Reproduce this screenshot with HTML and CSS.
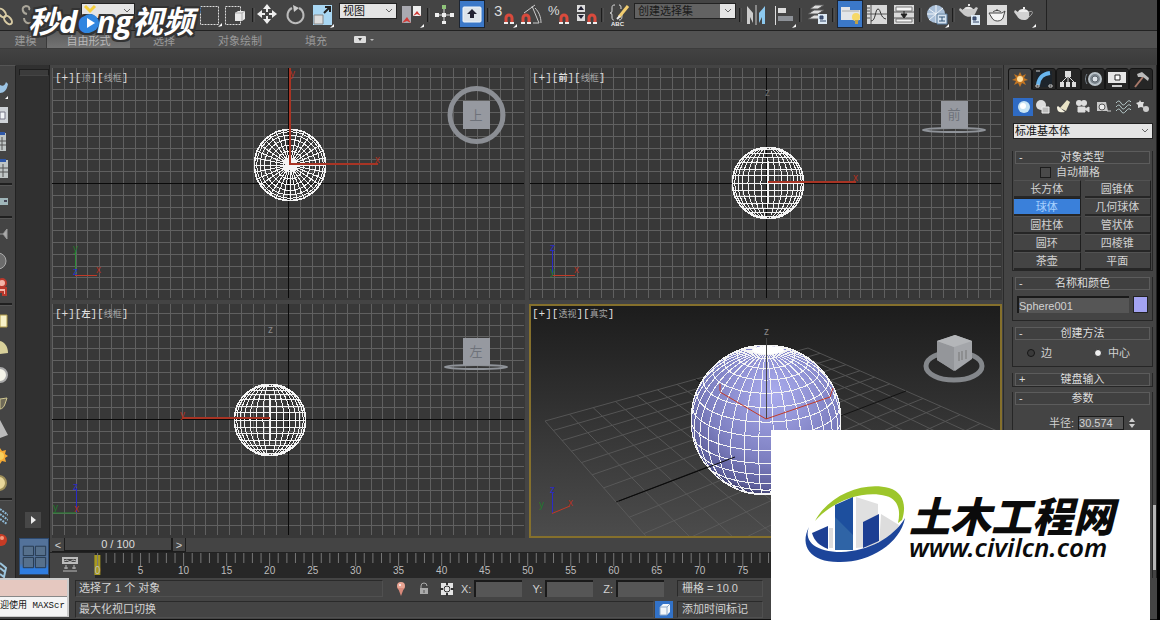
FILE: index.html
```html
<!DOCTYPE html>
<html lang="zh-CN">
<head>
<meta charset="utf-8">
<title>3ds Max</title>
<link rel="stylesheet" href="styles.css">
</head>
<body>
<div class="app">
  <header class="toolbar">
    <div class="tools">
      <button class="tool" aria-label="链接"><svg viewBox="0 0 24 24"><g fill="none" stroke="#d8cba4" stroke-width="2"><ellipse cx="8" cy="11" rx="3" ry="5" transform="rotate(-40 8 11)"/><ellipse cx="14" cy="18" rx="3" ry="5" transform="rotate(-40 14 18)"/></g></svg></button>
      <button class="tool" aria-label="取消链接"><svg viewBox="0 0 24 24"><g fill="none" stroke="#aaa69a" stroke-width="2"><path d="M6 12c-5-1-6-7-1-8 3 0 4 2 3 4M3 16c0 4 3 6 7 5"/></g></svg></button>
      <span class="spacer"></span>
      <select class="combo filter" aria-label="选择过滤器"><option></option></select>
      <span class="spacer wide"></span>
      <button class="tool" aria-label="矩形选择区域"><svg viewBox="0 0 24 24"><rect x="2.500" y="4.500" width="18" height="18" fill="none" stroke="#ddd" stroke-dasharray="2 1"/><path d="M20 25l4-4v3z" fill="#fff"/></svg></button>
      <button class="tool" aria-label="窗口/交叉"><svg viewBox="0 0 24 24"><rect x="0.500" y="4.500" width="15" height="18" fill="none" stroke="#ddd" stroke-dasharray="2 1"/><path d="M10 11l3-2h7v8l-3 2h-7z" fill="#e8e8e8"/><path d="M10 11h7v8M17 11l3-2" fill="none" stroke="#aaa"/></svg></button>
      <i class="sep"></i>
      <button class="tool" aria-label="移动"><svg viewBox="0 0 24 24"><path d="M9 2l4 5H5zM9 22l4-5H5zM-1 12l5-4v8zM19 12l-5-4v8z" fill="#eee"/><path d="M9 6v4M9 14v4M3 12h4M11 12h4" stroke="#eee" stroke-width="2"/></svg></button>
      <button class="tool" aria-label="旋转"><svg viewBox="0 0 24 24"><path d="M7 6A8 8 0 1 0 14 6" fill="none" stroke="#bbb" stroke-width="2"/><path d="M8 3l6 3-5 4z" fill="#ccc"/></svg></button>
      <button class="tool" aria-label="缩放"><svg viewBox="0 0 24 24"><path d="M1 3h19v20H1z" fill="#a9d7f3"/><path d="M2 13h9v9H2z" fill="#ddd" stroke="#888"/><path d="M12 11l5-5M13 5h5v5" stroke="#222" stroke-width="2" fill="none"/><path d="M18 26l4-4v3z" fill="#fff"/></svg></button>
      <select class="combo view" aria-label="参考坐标系"><option>视图</option></select>
      <button class="tool" aria-label="使用轴点中心"><svg viewBox="0 0 24 24"><path d="M2 4h9v17H2z" fill="#a9a9b0"/><path d="M13 4h8v10h-8z" fill="#eee"/><path d="M2 21l5-6 4 6-4-2zM13 14l4-5 4 5-4-2z" fill="#d23a36"/><path d="M20 26l4-4v3z" fill="#fff"/></svg></button>
      <i class="sep"></i>
      <button class="tool" aria-label="选择并操纵"><svg viewBox="0 0 24 24"><path d="M11 5v17M3 13h17" stroke="#ddd"/><path d="M9 3h4v4H9z" fill="#8fc47a"/><path d="M9 11h4v4H9zM2 11h4v4H2zM17 11h4v4h-4zM9 19h4v3H9z" fill="#eee"/></svg></button>
      <button class="tool on" aria-label="键盘快捷键覆盖切换"><svg viewBox="0 0 24 24"><rect x="3" y="5" width="18" height="15" rx="1" fill="#dce3ea" stroke="#eff5fa"/><path d="M12 7l5 5h-3v4h-4v-4H7z" fill="#223"/></svg></button>
      <i class="sep"></i>
      <button class="tool" aria-label="捕捉开关"><svg viewBox="0 0 24 24"><text class="num" x="1" y="14">3</text><path d="M13 22v-6a3 3 0 0 1 6 0v6" stroke="#d94a3c" stroke-width="3" fill="none"/><path d="M11 21h4M17 21h4" stroke="#eee" stroke-width="2"/><path d="M20 26l4-4v3z" fill="#fff"/></svg></button>
      <button class="tool" aria-label="角度捕捉"><svg viewBox="0 0 24 24"><path d="M3 22v-6a3 3 0 0 1 6 0v6" stroke="#d94a3c" stroke-width="3" fill="none"/><path d="M1 21h4M7 21h4" stroke="#eee" stroke-width="2"/><path d="M4 11l11-8M12 4l7 17h-6M15 6c4 4 6 9 6 15" stroke="#ccc" fill="none"/></svg></button>
      <button class="tool" aria-label="百分比捕捉"><svg viewBox="0 0 24 24"><text class="num pct" x="1" y="13">%</text><path d="M14 22v-6a3 3 0 0 1 6 0v6" stroke="#d94a3c" stroke-width="3" fill="none"/><path d="M12 21h4M18 21h4" stroke="#eee" stroke-width="2"/></svg></button>
      <button class="tool" aria-label="微调器捕捉"><svg viewBox="0 0 24 24"><path d="M3 3h8v7H3zM3 12h8v7H3z" fill="#ddd"/><path d="M4 8l3-4 3 4zM4 13l3 4 3-4z" fill="#223"/><path d="M15 22v-6a3 3 0 0 1 6 0v6" stroke="#d94a3c" stroke-width="3" fill="none"/><path d="M13 21h4M19 21h4" stroke="#eee" stroke-width="2"/></svg></button>
      <i class="sep"></i>
      <button class="tool" aria-label="编辑命名选择集"><svg viewBox="0 0 24 24"><path d="M8 3c-3 0-3 1-3 4s0 4-2 4c2 0 2 1 2 4s1 3 2 3M12 3c2 0 2 1 2 4M15 12c0 4 0 6-3 6" stroke="#ddd" fill="none"/><path d="M12 15l9-11" stroke="#f2cd70" stroke-width="3"/><path d="M10 17l3-3" stroke="#eee" stroke-width="2"/><text class="abc" x="4" y="24">ABC</text></svg></button>
      <select class="combo sets" aria-label="命名选择集"><option>创建选择集</option></select>
      <i class="sep"></i>
      <button class="tool" aria-label="镜像"><svg viewBox="0 0 24 24"><path d="M2 4l6 7v10l-3-6v7H2z" fill="#ccc"/><path d="M20 4l-6 7v10l3-6v7h3z" fill="#8cc8ee"/><path d="M11 3v20" stroke="#ccc"/></svg></button>
      <button class="tool" aria-label="对齐"><svg viewBox="0 0 24 24"><path d="M3.500 4v19" stroke="#ddd"/><path d="M6 6h8v5H6z" fill="#ddd"/><path d="M6 14h15v5H6z" fill="#8d9197"/><path d="M20 26l4-4v3z" fill="#fff"/></svg></button>
      <i class="sep"></i>
      <button class="tool" aria-label="层管理器"><svg viewBox="0 0 24 24"><path d="M3 17l6-4h10l-6 4zM3 12l6-4h10l-6 4zM5 7l5-4h9l-6 4z" fill="#ddd" stroke="#555"/><path d="M13 12h9v10h-9z" fill="#dbe8f3"/><path d="M15 14h3v3h-3zM15 19h6" stroke="#346" fill="#457"/></svg></button>
      <i class="sep"></i>
      <button class="tool on" aria-label="功能区切换"><svg viewBox="0 0 24 24"><path d="M3 5h9v3h10v10H3z" fill="#e3e5e8"/><path d="M4 9h17" stroke="#aaa"/><circle cx="18" cy="15" r="4" fill="#f6d868"/><path d="M17 18h3v4h-3z" fill="#bfa048"/></svg></button>
      <button class="tool" aria-label="曲线编辑器"><svg viewBox="0 0 24 24"><path d="M2 3h20v19H2z" fill="#d9d9d9"/><path d="M6 3v19M2 12h20M2 6h3M2 9h3M2 16h3" stroke="#555"/><path d="M6 19c5 0 4-12 7-12s2 9 8 10" stroke="#333" fill="none"/></svg></button>
      <button class="tool" aria-label="图解视图"><svg viewBox="0 0 24 24"><path d="M2 3h20v19H2z" fill="#d9d9d9"/><path d="M4 5h16v4H4zM4 17h16v3H4z" fill="#f4f4f4" stroke="#777"/><path d="M2 10h20M2 16h20" stroke="#555"/><path d="M12 9v4M9 12h6l-3 4z" stroke="#222" fill="#222"/></svg></button>
      <i class="sep"></i>
      <button class="tool" aria-label="材质编辑器"><svg viewBox="0 0 24 24"><circle cx="11" cy="12" r="9" fill="#a9bfd8"/><path d="M4 7l14 10M18 6L4 18M11 3v18M2 12h18" stroke="#eef3f8"/><path d="M12 12h10v10H12z" fill="#d5e2ef" stroke="#579"/><path d="M14 15h6M17 15v4M14 19h6" stroke="#357"/><path d="M20 26l4-4v3z" fill="#fff"/></svg></button>
      <i class="sep"></i>
      <button class="tool" aria-label="渲染设置"><svg viewBox="0 0 24 24"><path d="M5 7h11l2-2 2 1-3 6c-1 3-8 4-11 1L1 8l1-2 3 2z" fill="#c9c9c9"/><path d="M6 7c1-3 7-3 9 0zM10 2h2v2h-2z" fill="#e4e4e4"/><path d="M13 13h9v10h-9z" fill="#dbe8f3"/><path d="M15 15h3v3h-3zM15 20h6" stroke="#346" fill="#457"/></svg></button>
      <button class="tool" aria-label="渲染帧窗口"><svg viewBox="0 0 24 24"><path d="M2 3h20v20H2z" fill="#dcdcdc"/><path d="M7 11h10l3-2-2 7c-2 4-9 4-11 0l-3-5z" fill="#f6f6f6" stroke="#444"/><path d="M8 10c2-2 6-2 8 0M12 7v2" stroke="#444" fill="none"/></svg></button>
      <button class="tool" aria-label="渲染产品"><svg viewBox="0 0 24 24"><path d="M6 10h11c1 6-1 8-5 8s-6-2-7-4L2 10l1-2z" fill="#d2d2d2"/><path d="M6 10c1-4 9-4 11 0zM11 5h2v2h-2z" fill="#eee"/><path d="M17 10c4-2 5 1 0 5" stroke="#aaa" fill="none"/><path d="M20 26l4-4v3z" fill="#fff"/></svg></button>
    </div>
  </header>

  <nav class="ribbon">
    <button class="rtab">建模</button>
    <button class="rtab active">自由形式</button>
    <button class="rtab">选择</button>
    <button class="rtab">对象绘制</button>
    <button class="rtab">填充</button>
    <button class="rmenu" aria-label="功能区选项"><svg viewBox="0 0 22 8"><rect x="0" y="0" width="12" height="7" rx="1" fill="#ddd"/><path d="M4 2h4L6 5z" fill="#444"/><path d="M16 3h4l-2 2z" fill="#bbb"/></svg></button>
  </nav>
  <div class="ribbon-body"></div>

  <main class="work">
    <aside class="side">
      <svg viewBox="0 0 8 24"><path d="M0 10c3 2 5 0 6-3l2 2c-1 6-4 9-8 9z" fill="#9cc4e4"/><path d="M5 24l3-3v3z" fill="#fff"/></svg>
      <svg viewBox="0 0 8 24"><path d="M0 5h8v16H0z" fill="#cfd3d8"/><path d="M0 10h5v7H0z" fill="#f1f4f8" stroke="#778"/></svg>
      <svg viewBox="0 0 8 24"><path d="M0 4h6v18H0z" fill="#bfc5c5"/><path d="M0 3h5v3H0z" fill="#2f58a8"/><path d="M2 8v13M0 12h6M0 16h6" stroke="#555"/></svg>
      <svg viewBox="0 0 8 24"><path d="M0 4h8v18H0z" fill="#bfc5c5"/><path d="M0 3h6v3H0z" fill="#2f58a8"/><path d="M3 8v13M0 12h8M0 16h8" stroke="#555"/></svg>
      <i class="hsep"></i>
      <svg viewBox="0 0 8 24"><path d="M0 9h8v7H0z" fill="#9fb5b9"/><path d="M4 12h3" stroke="#445" stroke-width="2"/></svg>
      <i class="hsep"></i>
      <svg viewBox="0 0 8 24"><path d="M0 12h3l4-5v10l-4-5" fill="#aaa" stroke="#999"/></svg>
      <svg viewBox="0 0 8 24"><circle cx="-2" cy="12" r="8" fill="#6c6c6c" stroke="#aaa"/></svg>
      <svg viewBox="0 0 8 24"><circle cx="2" cy="7" r="4" fill="#f3b4a8" stroke="#b8382c" stroke-width="2"/><path d="M0 12h6v7H3v-3H0" fill="#f3b4a8" stroke="#b8382c" stroke-width="2"/></svg>
      <i class="hsep"></i>
      <svg viewBox="0 0 8 24"><path d="M0 6h7v12H0z" fill="#f8f2c9" stroke="#b09b4a"/></svg>
      <svg viewBox="0 0 8 24"><path d="M0 5c5 1 8 6 8 12l-8 1z" fill="#d8d09a"/></svg>
      <svg viewBox="0 0 8 24"><circle cx="0" cy="12" r="7" fill="#f4f3e8" stroke="#aaa" stroke-width="2"/></svg>
      <svg viewBox="0 0 8 24"><path d="M0 9l7-1-2 6c-1 3-3 5-5 5z" fill="#6f6a58" stroke="#cfc690"/></svg>
      <svg viewBox="0 0 8 24"><path d="M0 3l8 15-8 3z" fill="#bbb"/></svg>
      <svg viewBox="0 0 8 24"><path d="M0 4l2 3 4-1-1 4 3 2-3 2 1 4-4-1-2 3z" fill="#f4a933"/><circle cx="0" cy="12" r="4" fill="#f8cf5c"/></svg>
      <svg viewBox="0 0 8 24"><circle cx="-1" cy="12" r="7" fill="#e7d69a" stroke="#9d8e59" stroke-width="2"/></svg>
      <i class="hsep"></i>
      <svg viewBox="0 0 8 24"><path d="M0 5l8 6M0 10l8 6M0 15l7 5" stroke="#8fb9d6" stroke-width="2" stroke-dasharray="2 1"/></svg>
      <svg viewBox="0 0 8 24"><circle cx="1" cy="9" r="6" fill="#c63b25"/><circle cx="2" cy="7" r="2" fill="#f59a7c"/></svg>
      <svg viewBox="0 0 8 24"><path d="M0 5l6 5-2 9-4-3M0 10l5 4" fill="none" stroke="#9cc4dc" stroke-width="2"/></svg>
    </aside>
    <aside class="layouts">
      <span class="grip"></span>
      <button class="play" aria-label="展开"><svg viewBox="0 0 16 16"><path d="M6 4l5 4-5 4z" fill="#eee"/></svg></button>
      <button class="quad" aria-label="四视图"><svg viewBox="0 0 30 37"><g fill="#56708c" stroke="#26384e"><path d="M3.500 7.500h11v10h-11zM16.500 7.500h11v10h-11zM3.500 19.500h11v11h-11zM16.500 19.500h11v11h-11z"/></g></svg></button>
    </aside>

    <section class="center">
      <div class="views">
        <div class="vp"><svg id="vp-top" viewBox="52 68 473 232" preserveAspectRatio="xMidYMid slice"></svg><div class="vlabel">[+][<small>顶</small>][<small>线框</small>]</div></div>
        <div class="vp"><svg id="vp-front" viewBox="529 68 473 232" preserveAspectRatio="xMidYMid slice"></svg><div class="vlabel">[+][<b>前</b>][<small>线框</small>]</div></div>
        <div class="vp"><svg id="vp-left" viewBox="52 304 473 234" preserveAspectRatio="xMidYMid slice"></svg><div class="vlabel">[+][<b>左</b>][<small>线框</small>]</div></div>
        <div class="vp live"><svg id="vp-persp" viewBox="529 304 473 234" preserveAspectRatio="xMidYMid slice"></svg><div class="vlabel">[+][<small>透视</small>][<small>真实</small>]</div></div>
      </div>
      <div class="slider"><button>&lt;</button><button class="frame">0 / 100</button><button>&gt;</button></div>
      <div class="timeline">
        <svg class="mini" viewBox="0 0 16 16"><path d="M1 1h14v5H1z" fill="none" stroke="#bbb" stroke-width="2"/><path d="M2 4l3-1 3 2 3-2 3 1M1 14h14M4 8v4M12 8v4M2 11h4M10 11h4" stroke="#bbb" fill="none"/></svg>
        <div class="ruler"><svg id="ruler"></svg></div>
      </div>
    </section>

    <aside class="panel">
      <div class="ptabs">
        <button class="ptab active" aria-label="创建"><svg viewBox="0 0 20 18"><path d="M10 2l2 4 4-2-2 4 4 2-4 1 2 4-4-2-2 4-2-4-4 2 2-4-4-1 4-2-2-4 4 2z" fill="#c57722"/><circle cx="10" cy="9" r="3" fill="#ffe0a0"/></svg></button>
        <button class="ptab" aria-label="修改"><svg viewBox="0 0 20 18"><path d="M2 1h16v16H2z" fill="#1d242b"/><path d="M4 15C5 7 9 4 16 3" stroke="#69b6ee" stroke-width="4" fill="none"/><path d="M2 1h4M15 15h3v2h-3zM2 15h3v2H2z" stroke="#ccc"/></svg></button>
        <button class="ptab" aria-label="层次"><svg viewBox="0 0 20 18"><path d="M7 1h6v6H7zM2 12h4v5H2zM8 12h4v5H8zM14 12h4v5h-4z" fill="#ddd"/><path d="M10 6v6M4 12l5-5M16 12l-5-5" stroke="#ddd"/></svg></button>
        <button class="ptab" aria-label="运动"><svg viewBox="0 0 20 18"><circle cx="12" cy="9" r="6" fill="#7b858d" stroke="#b9c2c8" stroke-width="2"/><circle cx="12" cy="9" r="3" fill="#dde3e8" stroke="#59626a"/><path d="M4 4c-2 3-2 7 0 10" stroke="#78838c" fill="none"/></svg></button>
        <button class="ptab" aria-label="显示"><svg viewBox="0 0 20 18"><path d="M1 2h18v11H1z" fill="#e6e6e6"/><path d="M8 5h5v5H8z" fill="#fff" stroke="#222"/><path d="M5 15h10v2H5z" fill="#ccc"/></svg></button>
        <button class="ptab" aria-label="工具"><svg viewBox="0 0 20 18"><path d="M4 17L12 7" stroke="#a9796a" stroke-width="2"/><path d="M6 4l5-2 7 6-1 3-5-4-5 0z" fill="#bbb"/></svg></button>
      </div>
      <div class="cats">
        <button class="cat on" aria-label="几何体"><svg viewBox="0 0 18 18"><circle cx="10" cy="9" r="6" fill="#c8e4f4"/><circle cx="9" cy="8" r="3" fill="#fff"/></svg></button>
        <button class="cat" aria-label="图形"><svg viewBox="0 0 18 18"><circle cx="7" cy="7" r="5" fill="#ddd"/><path d="M8 9h7v6H8z" fill="#bbb" stroke="#eee"/></svg></button>
        <button class="cat" aria-label="灯光"><svg viewBox="0 0 18 18"><path d="M13 2l3 2-4 9-6-3z" fill="#e9e3c6"/><path d="M3 9c0 5 3 6 8 5L4 8z" fill="#f5f1df"/></svg></button>
        <button class="cat" aria-label="摄影机"><svg viewBox="0 0 18 18"><circle cx="5" cy="5" r="3" fill="#ddd"/><circle cx="10" cy="5" r="3" fill="#ddd"/><path d="M4 9h7v5H4zM11 11l4-2v5z" fill="#ddd" stroke="#ddd"/></svg></button>
        <button class="cat" aria-label="辅助对象"><svg viewBox="0 0 18 18"><path d="M3 4h9l2 9H3z" fill="#c9c9c9"/><circle cx="8" cy="9" r="3" fill="#eee" stroke="#555"/><path d="M13 13h4" stroke="#ccc"/></svg></button>
        <button class="cat" aria-label="空间扭曲"><svg viewBox="0 0 18 18"><path d="M2 5q3-4 5 0t5 0t5-1M2 9q3-4 5 0t5 0t5-1M2 13q3-4 5 0t5 0t5-1" stroke="#b5c8c8" fill="none"/></svg></button>
        <button class="cat" aria-label="系统"><svg viewBox="0 0 18 18"><path d="M6 2l1 2 3 0-1 3 1 3-3-1-3 1 0-3-2-2 3-1z" fill="#ddd"/><circle cx="12" cy="11" r="3" fill="#ccc"/></svg></button>
      </div>
      <select class="combo prim" aria-label="对象类别"><option>标准基本体</option></select>
      <section class="roll first">
        <h2><span>-</span>对象类型</h2>
        <label class="auto"><input type="checkbox">自动栅格</label>
        <div class="types">
          <button>长方体</button><button>圆锥体</button>
          <button class="sel">球体</button><button>几何球体</button>
          <button>圆柱体</button><button>管状体</button>
          <button>圆环</button><button>四棱锥</button>
          <button>茶壶</button><button>平面</button>
        </div>
      </section>
      <section class="roll">
        <h2><span>-</span>名称和颜色</h2>
        <div class="name"><input type="text" value="Sphere001" aria-label="名称"><button class="swatch" aria-label="颜色"></button></div>
      </section>
      <section class="roll">
        <h2><span>-</span>创建方法</h2>
        <div class="radios"><label><input type="radio" name="m">边</label><label><input type="radio" name="m" checked>中心</label></div>
      </section>
      <section class="roll">
        <h2><span>+</span>键盘输入</h2>
      </section>
      <section class="roll params">
        <h2><span>-</span>参数</h2>
        <div class="radius"><label for="rad">半径:</label><input id="rad" type="text" value="30.574"><svg viewBox="0 0 8 12"><path d="M1 5l3-4 3 4zM1 7h6l-3 4z" fill="#ccc"/></svg></div>
      </section>
    </aside>
  </main>

  <footer class="status">
    <div class="listener"><div class="rec"></div><div class="out">迎使用 MAXScr</div></div>
    <div class="rows">
      <div class="row">
        <div class="msg">选择了 1 个 对象</div>
        <svg class="sicon" viewBox="0 0 16 16"><circle cx="8" cy="5" r="4" fill="#e9a493"/><path d="M5 7h6l-3 8z" fill="#d8897a"/><circle cx="7" cy="4" r="1" fill="#fff"/></svg>
        <svg class="sicon" viewBox="0 0 16 16"><path d="M5 8V5a3 3 0 0 1 6 0" fill="none" stroke="#aaa"/><path d="M4 7h8v6H4z" fill="#aaa"/><path d="M8 9v3" stroke="#555"/></svg>
        <svg class="sicon" viewBox="0 0 16 16"><path d="M2 2h12v12H2z" fill="#e4e4e4"/><circle cx="8" cy="8" r="3" fill="#e4e4e4" stroke="#333"/><path d="M8 1v3M8 12v3M1 8h3M12 8h3" stroke="#333" stroke-width="2"/></svg>
        <label>X:<input type="text"></label>
        <label>Y:<input type="text"></label>
        <label>Z:<input type="text"></label>
        <div class="cell">栅格 = 10.0</div>
      </div>
      <div class="row">
        <div class="msg">最大化视口切换</div>
        <button class="iso" aria-label="孤立当前选择"><svg viewBox="0 0 18 16"><path d="M5 5l3-3h7v8l-3 3H5z" fill="#f2f6fa"/><path d="M5 5h7v8H5zM12 5l3-3" fill="none" stroke="#8fa8c6"/></svg></button>
        <div class="cell">添加时间标记</div>
      </div>
    </div>
  </footer>

  <div class="miaodong"><span>秒d<span class="o">o</span>ng视频</span><svg viewBox="0 0 24 32"><circle cx="12" cy="20" r="9" fill="#2f86e0"/><path d="M9 15l8 5-8 5z" fill="#fff"/><path d="M7 3l5 5 5-5" stroke="#f6cf3c" stroke-width="3" fill="none"/></svg></div>

  <div class="thumb"></div>
  <div class="civil">
    <svg viewBox="0 0 104 86">
      <path d="M10 39C24 12 60-1 84 6c14 4 18 17 13 32l-4 3c3-13 0-24-12-27C60 8 28 18 10 39z" fill="#9dc62b"/>
      <path d="M51 15l22 7v42l-22 2z" fill="#e0e0e0"/><path d="M76 32l18 11-10 20H74z" fill="#ddd"/>
      <path d="M30 23l18-8v53H30z" fill="#1d4f9e"/><path d="M30 35l18 18v15H30z" fill="#4179ad" opacity=".5"/>
      <path d="M7 51l16-7v23c-8-3-14-8-16-16z" fill="#1d3f93"/><path d="M26 46v20" stroke="#ddd" stroke-width="4"/>
      <path d="M58 40l16-8v27l-16 7z" fill="#1d3f93"/>
      <path d="M4 45C-2 60 12 70 36 70c28-1 52-14 64-34-5 26-36 45-67 44C6 80-6 64 4 45z" fill="#1d459a"/>
    </svg>
    <div class="ctext"><strong>土木工程网</strong><a href="#">www.civilcn.com</a></div>
  </div>
</div>
<script src="scene.js"></script>
</body>
</html>
```
FILE: styles.css
```css
* { box-sizing: border-box; }
body {
  margin: 0;
  background: #000;
  color: #d2d2d2;
  font: 11px/14px "Liberation Sans", "Noto Sans CJK SC", sans-serif;
}
button, input, select { font: inherit; color: inherit; border: 0; border-radius: 0; padding: 0; margin: 0; background: none; }
svg { display: block; }
.app { position: relative; display: flex; flex-direction: column; height: 100vh; overflow: hidden; margin-right: 3px; background: #444; }

.toolbar { border-bottom: 1px solid #222; flex: none; }
.tools { display: flex; gap: 3px; height: 30px; margin-left: -6px; width: max-content; padding-right: 10px; border-right: 1px solid #222; }
.tool { width: 24px; height: 26px; margin-top: 1px; flex: none; }
.tool svg { width: 24px; height: 24px; overflow: visible; }
.tool.on { background: #3b78c8; outline: 1px solid #1c2533; }
.sep { width: 3px; height: 14px; margin-top: 8px; border-left: 1px solid #1d1d1d; border-right: 1px solid #505050; flex: none; }
.spacer { width: 30px; }
.spacer.wide { width: 57px; }
.num { font: 15px "Liberation Sans", sans-serif; fill: #ddd; }
.num.pct { font-size: 13px; }
.abc { font: bold 6px "Liberation Sans", sans-serif; fill: #eee; }
.combo {
  height: 16px; margin-top: 3px; padding: 0 3px; color: #111; border: 1px solid #222;
  appearance: none;
  background: #e4e4e4 url("data:image/svg+xml,%3Csvg xmlns='http://www.w3.org/2000/svg' width='9' height='6'%3E%3Cpath d='M1 1l3 3 3-3' fill='none' stroke='%23666'/%3E%3C/svg%3E") no-repeat right 2px center;
}
.combo.view { width: 58px; }
.combo.filter { width: 54px; }
.combo.sets {
  width: 102px; color: #1a1a1a;
  background:
    url("data:image/svg+xml,%3Csvg xmlns='http://www.w3.org/2000/svg' width='9' height='6'%3E%3Cpath d='M1 1l3 3 3-3' fill='none' stroke='%23666'/%3E%3C/svg%3E") no-repeat right 2px center,
    linear-gradient(90deg, #626262 calc(100% - 15px), #e4e4e4 calc(100% - 15px));
}

.ribbon { display: flex; height: 18px; flex: none; background: #525252; color: #999; border-bottom: 1px solid #3c3c3c; }
.rtab { text-align: center; width: 68px; padding-top: 2px; }
.rtab:first-child { width: 47px; padding-left: 5px; border-right: 1px solid #3a3a3a; }
.rtab.active { width: 83px; background: linear-gradient(#5c5c5c, #737373); color: #b9b9b9; }
.rtab:nth-child(4) { width: 84px; }
.rtab:nth-child(5) { width: 68px; }
.rmenu { padding-left: 4px; }
.rmenu svg { width: 22px; height: 8px; }
.ribbon-body { height: 16px; flex: none; background: linear-gradient(#424242, #3a3a3a); }

.work { flex: 1; display: flex; min-height: 0; }
.side { width: 16px; flex: none; display: flex; flex-direction: column; gap: 3px; padding-top: 9px; overflow: hidden; border-right: 1px solid #222; border-top: 1px solid #555; }
.side svg { width: 8px; height: 24px; flex: none; }
.hsep { height: 3px; width: 12px; border-top: 2px solid #1f1f1f; border-bottom: 1px solid #555; flex: none; }
.layouts { width: 34px; flex: none; display: flex; flex-direction: column; background: #303030; padding: 4px 0 3px 3px; border-right: 1px solid #222; }
.grip { height: 7px; border: 1px solid #1e1e1e; border-bottom-color: #444; background: #3b3b3b; }
.play { width: 16px; height: 16px; margin: auto 0 10px 6px; background: #474747; }
.quad { height: 37px; background: linear-gradient(#53729a 70%, #2f7de0 85%); border: 1px solid #2d4a70; }
.quad svg { width: 28px; height: 35px; }
.center { flex: 1; min-width: 0; display: flex; flex-direction: column; }
.views { flex: 1; min-height: 0; display: grid; grid-template: 232fr 234fr / 1fr 1fr; gap: 4px; padding: 3px 1px 0 2px; background: #444; }
.vp { position: relative; min-height: 0; background: #383838; overflow: hidden; }
.vp > svg { width: 100%; height: 100%; }
.vp.live { background: linear-gradient(#1c1c1c, #4c4c4c); }
.vp.live::after { content: ""; position: absolute; inset: 0; border: 2px solid #85702c; }
.vlabel { position: absolute; left: 3px; top: 3px; font: 11px/14px "Liberation Mono", "Noto Sans CJK SC", monospace; color: #ddd; }
.vlabel small { font: 9px "Noto Sans CJK SC", sans-serif; color: #a5a5a5; }
.vlabel b { font: bold 9px "Noto Sans CJK SC", sans-serif; }
.grid { stroke: #606060; stroke-width: 1; }
.zero { stroke: #0a0a0a; stroke-width: 1; }
.ortho .grid, .ortho .zero { shape-rendering: crispEdges; }
.mesh { fill: none; stroke: #f4f4f4; stroke-width: 1; shape-rendering: crispEdges; }
.red { stroke: #c23a26; fill: none; }
.green { stroke: #2a8a35; fill: none; }
.blue { stroke: #2a2ac8; fill: none; }
.long { stroke: #a83424; stroke-width: 2; }
.axis { font: 10px "Liberation Sans", sans-serif; stroke: none; }
.cubetext { font: 13px "Noto Sans CJK SC", sans-serif; fill: #6e727a; text-anchor: middle; }

.slider { display: flex; height: 14px; flex: none; margin-left: 2px; }
.slider button { width: 13px; border-right: 1px solid #1c1c1c; border-bottom: 1px solid #1c1c1c; line-height: 12px; }
.slider .frame { width: 108px; border-bottom-width: 2px; border-right-width: 2px; color: #ddd; }
.timeline { display: flex; height: 26px; flex: none; border-top: 1px solid #222; }
.mini { width: 16px; height: 16px; margin: 4px 3px 0 12px; }
.ruler { flex: 1; min-width: 0; background: linear-gradient(90deg, #444 14px, #272727 14px); }
.ruler svg { width: 100%; height: 25px; }
.ruler text { font: 10px "Liberation Sans", sans-serif; fill: #bdbdbd; text-anchor: middle; }
.tick { stroke: #777; }

.panel { width: 154px; flex: none; padding: 3px 3px 0 4px; border-left: 1px solid #2a2a2a; border-right: 1px solid #222; overflow: hidden; }
.ptabs { display: flex; }
.ptab { flex: 1; height: 22px; display: grid; place-items: center; background: #262626; border: 1px solid #151515; border-radius: 3px 3px 0 0; }
.ptab.active { background: #444; border-bottom-color: #444; }
.ptab svg { width: 20px; height: 18px; }
.cats { display: flex; justify-content: space-between; margin: 8px 0 7px 5px; }
.cat { width: 20px; height: 18px; display: grid; place-items: center; }
.cat.on { background: #2f6bc4; }
.cat svg { width: 18px; height: 18px; }
.combo.prim { display: block; width: 140px; margin: 0 0 0 5px; padding: 0 1px; line-height: 14px; }
.roll { position: relative; margin: 6px 0 0 4px; padding: 0 1px; border: 1px solid #262626; border-top: 0; }
.roll.first { margin-top: 12px; }
.roll h2 { position: relative; margin: 0 1px; height: 13px; border: 1px solid #5c5c5c; font: 11px/11px "Liberation Sans", "Noto Sans CJK SC", sans-serif; color: #ddd; text-align: center; background: #404040; }
.roll h2 span { position: absolute; left: 3px; }
.auto { display: flex; align-items: center; height: 16px; margin-left: 26px; gap: 5px; }
.auto input { appearance: none; width: 11px; height: 11px; background: #4a4a4a; border: 1px solid #1c1c1c; }
.types { display: grid; grid-template-columns: 1fr 1fr; column-gap: 4px; }
.types button { height: 18px; line-height: 16px; border-right: 1px solid #1e1e1e; border-bottom: 2px solid #262626; border-top: 1px solid #525252; }
.types .sel { background: #3a80da; border-top-color: #222; color: #a9d2ff; }
.name { display: flex; gap: 4px; padding: 6px 3px 7px; }
.name input { flex: 1; min-width: 0; height: 17px; background: #565656; border: 1px solid #1a1a1a; border-width: 2px 0 0 2px; }
.swatch { width: 15px; height: 17px; background: #a3a3f2; border: 1px solid #222; }
.radios { display: flex; gap: 42px; padding: 5px 0 5px 13px; }
.radios label { display: flex; align-items: center; gap: 6px; height: 16px; }
.radios input { appearance: none; width: 8px; height: 8px; border-radius: 50%; background: #3a3a3a; border: 1px solid #161616; }
.radios input:checked { background: #eee; border-color: #333; }
.roll.params { margin-top: 5px; border-bottom: 0; }
.radius { display: flex; align-items: center; gap: 4px; padding: 11px 14px 200px 35px; }
.radius input { width: 46px; height: 14px; background: #565656; border: 1px solid #1a1a1a; }
.radius svg { width: 8px; height: 12px; }

.status { display: flex; height: 42px; flex: none; padding-bottom: 2px; border-bottom: 1px solid #111; }
.listener { width: 69px; flex: none; background: #f4f4f4; border: 1px solid #ccc; border-width: 2px 2px 1px 0; color: #111; overflow: hidden; }
.rec { height: 17px; background: #e5c8c0; border-bottom: 1px solid #888; }
.out { font: 9px/19px "Liberation Mono", "Noto Sans CJK SC", monospace; white-space: nowrap; }
.rows { flex: 0 1 688px; margin-left: 6px; display: flex; flex-direction: column; gap: 4px; padding-top: 2px; }
.row { display: flex; height: 18px; align-items: center; }
.msg { flex: 1; height: 17px; line-height: 15px; padding-left: 3px; border: 1px solid #2a2a2a; border-color: #2a2a2a #505050 #505050 #2a2a2a; margin-right: 3px; }
.row:last-child .msg { margin-right: 1px; }
.sicon { width: 16px; height: 16px; margin: 0 0 0 7px; }
.row label { display: flex; align-items: center; gap: 3px; margin-left: 6px; }
.row label + label { margin-left: 10px; }
.row label input { width: 48px; height: 17px; background: #565656; border: 1px solid #1a1a1a; border-width: 2px 0 0 2px; }
.cell { width: 86px; height: 17px; line-height: 15px; padding-left: 4px; margin-left: 13px; border: 1px solid #2a2a2a; border-color: #2a2a2a #505050 #505050 #2a2a2a; }
.iso { width: 18px; height: 17px; background: #3272c8; }
.iso svg { width: 18px; height: 16px; }
.iso + .cell { margin-left: 4px; }

.miaodong { position: absolute; left: 28px; top: 3px; font: italic bold 31px/36px "Open Sans", "Noto Sans CJK SC", sans-serif; color: #fff; white-space: nowrap; text-shadow: -2px 0 #333, 2px 0 #333, 0 -2px #333, 0 2px #333, 2px 2px #333, -2px -2px #333, 2px -2px #333, -2px 2px #333; }
.miaodong .o { font-style: normal; color: #2f86e0; }
.miaodong svg { position: absolute; left: 50px; top: 0; width: 24px; height: 32px; }
.thumb { position: absolute; right: 1px; bottom: 50px; width: 3px; height: 65px; background: #b5b5b5; }
.civil { position: absolute; right: 7px; bottom: 0; width: 379px; height: 190px; background: #fff; display: flex; align-items: center; padding-left: 34px; }
.civil svg { width: 104px; height: 86px; flex: none; overflow: visible; }
.ctext { display: flex; flex-direction: column; color: #0b0b0b; padding-top: 6px; }
.ctext strong { font: italic 900 41px/38px "Noto Sans CJK SC", sans-serif; }
.ctext a { font: italic 600 26px/28px "Noto Sans", sans-serif; color: inherit; text-decoration: none; }
```
FILE: scene.js
```js
const line = (x1, y1, x2, y2, c) => `<line class="${c}" x1="${x1}" y1="${y1}" x2="${x2}" y2="${y2}"/>`;
const label = (x, y, t, color) => `<text class="axis" x="${x}" y="${y}" fill="${color}">${t}</text>`;

// Orthographic construction grid with black origin lines.
function grid(x0, y0, x1, y1, ox, oy) {
  const step = 11.8;
  let s = '<g class="ortho">';
  for (let i = -25; i <= 25; i++) {
    const x = Math.round(ox + i * step) + 0.5, y = Math.round(oy + i * step) + 0.5;
    if (i && x > x0 && x < x1) s += line(x, y0, x, y1, 'grid');
    if (i && y > y0 && y < y1) s += line(x0, y, x1, y, 'grid');
  }
  return s + line(ox + 0.5, y0, ox + 0.5, y1, 'zero') + line(x0, oy + 0.5, x1, oy + 0.5, 'zero') + '</g>';
}

function sideSphere(cx, cy, r) {
  let s = `<g class="mesh"><circle cx="${cx}" cy="${cy}" r="${r}"/>`;
  for (let k = 1; k < 16; k++) {
    const a = k * Math.PI / 16, y = cy - r * Math.cos(a), w = r * Math.sin(a);
    s += `<line x1="${cx - w}" y1="${y}" x2="${cx + w}" y2="${y}"/>`;
  }
  for (let k = 0; k < 8; k++) s += `<ellipse cx="${cx}" cy="${cy}" rx="${Math.max(0.1, r * Math.sin(k * Math.PI / 16))}" ry="${r}"/>`;
  return s + '</g>';
}

function topSphere(cx, cy, r) {
  let s = '<g class="mesh">';
  for (let k = 1; k <= 8; k++) s += `<circle cx="${cx}" cy="${cy}" r="${r * Math.sin(k * Math.PI / 16)}"/>`;
  for (let k = 0; k < 32; k++) {
    const a = k * Math.PI / 16;
    s += `<line x1="${cx}" y1="${cy}" x2="${cx + r * Math.cos(a)}" y2="${cy + r * Math.sin(a)}"/>`;
  }
  return s + '</g>';
}

function tiltedSphere(cx, cy, r) {
  const e = 0.42, spin = 0.1;
  const project = (lat, lon) => {
    const x = Math.cos(lat) * Math.sin(lon), y = Math.cos(lat) * Math.cos(lon), z = Math.sin(lat);
    return [cx + r * x, cy - r * (z * Math.cos(e) - y * Math.sin(e)), y * Math.cos(e) + z * Math.sin(e)];
  };
  let d = '';
  const trace = fn => {
    let pen = false;
    for (let i = 0; i <= 96; i++) {
      const p = fn(i / 96);
      if (p[2] < -0.02) { pen = false; continue; }
      d += `${pen ? 'L' : 'M'}${p[0].toFixed(1)} ${p[1].toFixed(1)}`;
      pen = true;
    }
  };
  for (let k = 1; k < 16; k++) trace(t => project(Math.PI / 2 - k * Math.PI / 16, t * 2 * Math.PI));
  for (let k = 0; k < 32; k++) trace(t => project(Math.PI / 2 - t * Math.PI, spin + k * Math.PI / 16));
  return `<circle cx="${cx}" cy="${cy}" r="${r}" fill="url(#ball)"/><path class="mesh" d="${d}"/><circle class="mesh" cx="${cx}" cy="${cy}" r="${r}"/>`;
}

// Perspective floor: homography through four known corners.
function floor() {
  const g = 0.3436, h = -0.2092;
  const a = 808 - 545 + g * 808, b = 616 - 545 + h * 616, c = 545;
  const d = 348 - 421 + g * 348, e = 502 - 421 + h * 502, f = 421;
  const p = (s, t) => { const w = g * s + h * t + 1; return [(a * s + b * t + c) / w, (d * s + e * t + f) / w]; };
  let out = '';
  const seg = (s0, t0, s1, t1, k) => { out += line(...p(s0, t0), ...p(s1, t1), k); };
  for (let i = 0; i <= 14; i++) if (i !== 7) { seg(i / 14, 0, i / 14, 2, 'grid'); seg(0, i / 7, 1, i / 7, 'grid'); }
  seg(0.5, 0, 0.5, 2, 'zero'); seg(0, 1, 1, 1, 'zero');
  return out;
}

function flatCube(x, y, t) {
  return `<ellipse cx="${x}" cy="${y + 16}" rx="31" ry="2" fill="none" stroke="#8f9399" stroke-width="2"/><rect x="${x - 13}" y="${y - 13}" width="27" height="27" fill="#9699a0"/><text class="cubetext" x="${x}" y="${y + 5}">${t}</text>`;
}
const set = (id, s) => { document.getElementById(id).innerHTML = s; };

set('vp-top', grid(52, 68, 524, 298, 288, 183) + topSphere(290, 165, 36)
  + line(290, 68, 290, 165, 'long') + line(290, 164, 378, 164, 'long') + label(375, 163, 'x', '#b0301f') + label(290, 77, 'y', '#b0301f')
  + '<circle cx="476.500" cy="115" r="26.500" fill="none" stroke="#8b8e94" stroke-width="5"/><rect x="463" y="101" width="27" height="28" fill="#9699a0"/><text class="cubetext" x="476" y="120">上</text>'
  + line(75.5, 275, 75.5, 250, 'green') + line(75, 275.5, 97, 275.5, 'red') + label(73, 252, 'y', '#227a2c') + label(96, 273, 'x', '#b0301f') + label(73, 275, 'z', '#2a2ac8'));
set('vp-front', grid(530, 68, 1001, 298, 766, 183) + sideSphere(768, 183, 36)
  + line(768, 182, 856, 182, 'long') + label(853, 181, 'x', '#b0301f') + label(765, 96, 'z', '#707070') + flatCube(954, 114, '前')
  + line(552.5, 275, 552.5, 250, 'blue') + line(552, 275.5, 575, 275.5, 'red') + label(550, 251, 'z', '#2a2ac8') + label(574, 273, 'x', '#b0301f') + label(550, 275, 'y', '#227a2c'));
set('vp-left', grid(52, 304, 524, 535, 288, 419) + sideSphere(270, 420, 36)
  + line(182, 418, 270, 418, 'long') + label(180, 418, 'y', '#b0301f') + label(268, 333, 'z', '#8a8a8a') + flatCube(476, 351, '左')
  + line(76.5, 512, 76.5, 488, 'blue') + line(53, 513, 76, 513, 'green') + label(73, 490, 'z', '#2a2ac8') + label(53, 511, 'y', '#227a2c') + label(74, 512, 'x', '#b0301f'));
set('vp-persp', '<defs><radialGradient id="ball" cx="0.55" cy="0.32" r="0.75"><stop offset="0" stop-color="#a9abed"/><stop offset="0.6" stop-color="#7d7fc0"/><stop offset="0.85" stop-color="#5d5e9a"/><stop offset="1" stop-color="#15152a"/></radialGradient></defs><g opacity="0.75">' + floor() + '</g>'
  + tiltedSphere(766, 420, 75) + '<ellipse cx="768" cy="350" rx="16" ry="4" fill="#fff"/>'
  + line(619, 501, 735, 457, 'zero')
  + '<path d="M766.500 419V338" stroke="#444"/><path class="red" d="M720 392l46 27 64-22M720 384v7M830 397l3-9"/>' + label(764, 335, 'z', '#888')
  + '<ellipse cx="954" cy="366" rx="28" ry="14" fill="none" stroke="#84878b" stroke-width="5"/><path d="M937 341l18-6 17 6v18l-17 12-18-11z" fill="#a4a6aa"/><path d="M937 341l17 6v24l-17-11z" fill="#94969a"/><path d="M937 341l17 6 18-6-17-6z" fill="#b4b6b9"/><path d="M959 352v9M962 351v9M966 350v9" stroke="#777"/>'
  + line(552.5, 513, 552.5, 493, 'blue') + line(552, 513.5, 570, 506, 'red') + label(550, 493, 'z', '#2a2ac8') + label(568, 506, 'x', '#b0301f') + label(539, 508, 'y', '#227a2c'));

// Frame ruler, ticks every frame and a number every five.
let r = '';
const span = i => 1.8 + i * 0.933;
for (let i = 0; i <= 100; i++) {
  const x = span(i).toFixed(2) + '%';
  r += `<line class="tick" x1="${x}" x2="${x}" y1="0" y2="${i % 5 ? 10 : 13}"/>`;
}
r = '<rect x="1.450%" y="2" width="6" height="20" fill="#a89a1f"/>' + r;
for (let i = 0; i <= 100; i += 5) r += `<text x="${span(i).toFixed(2)}%" y="21">${i}</text>`;
set('ruler', r);
```
